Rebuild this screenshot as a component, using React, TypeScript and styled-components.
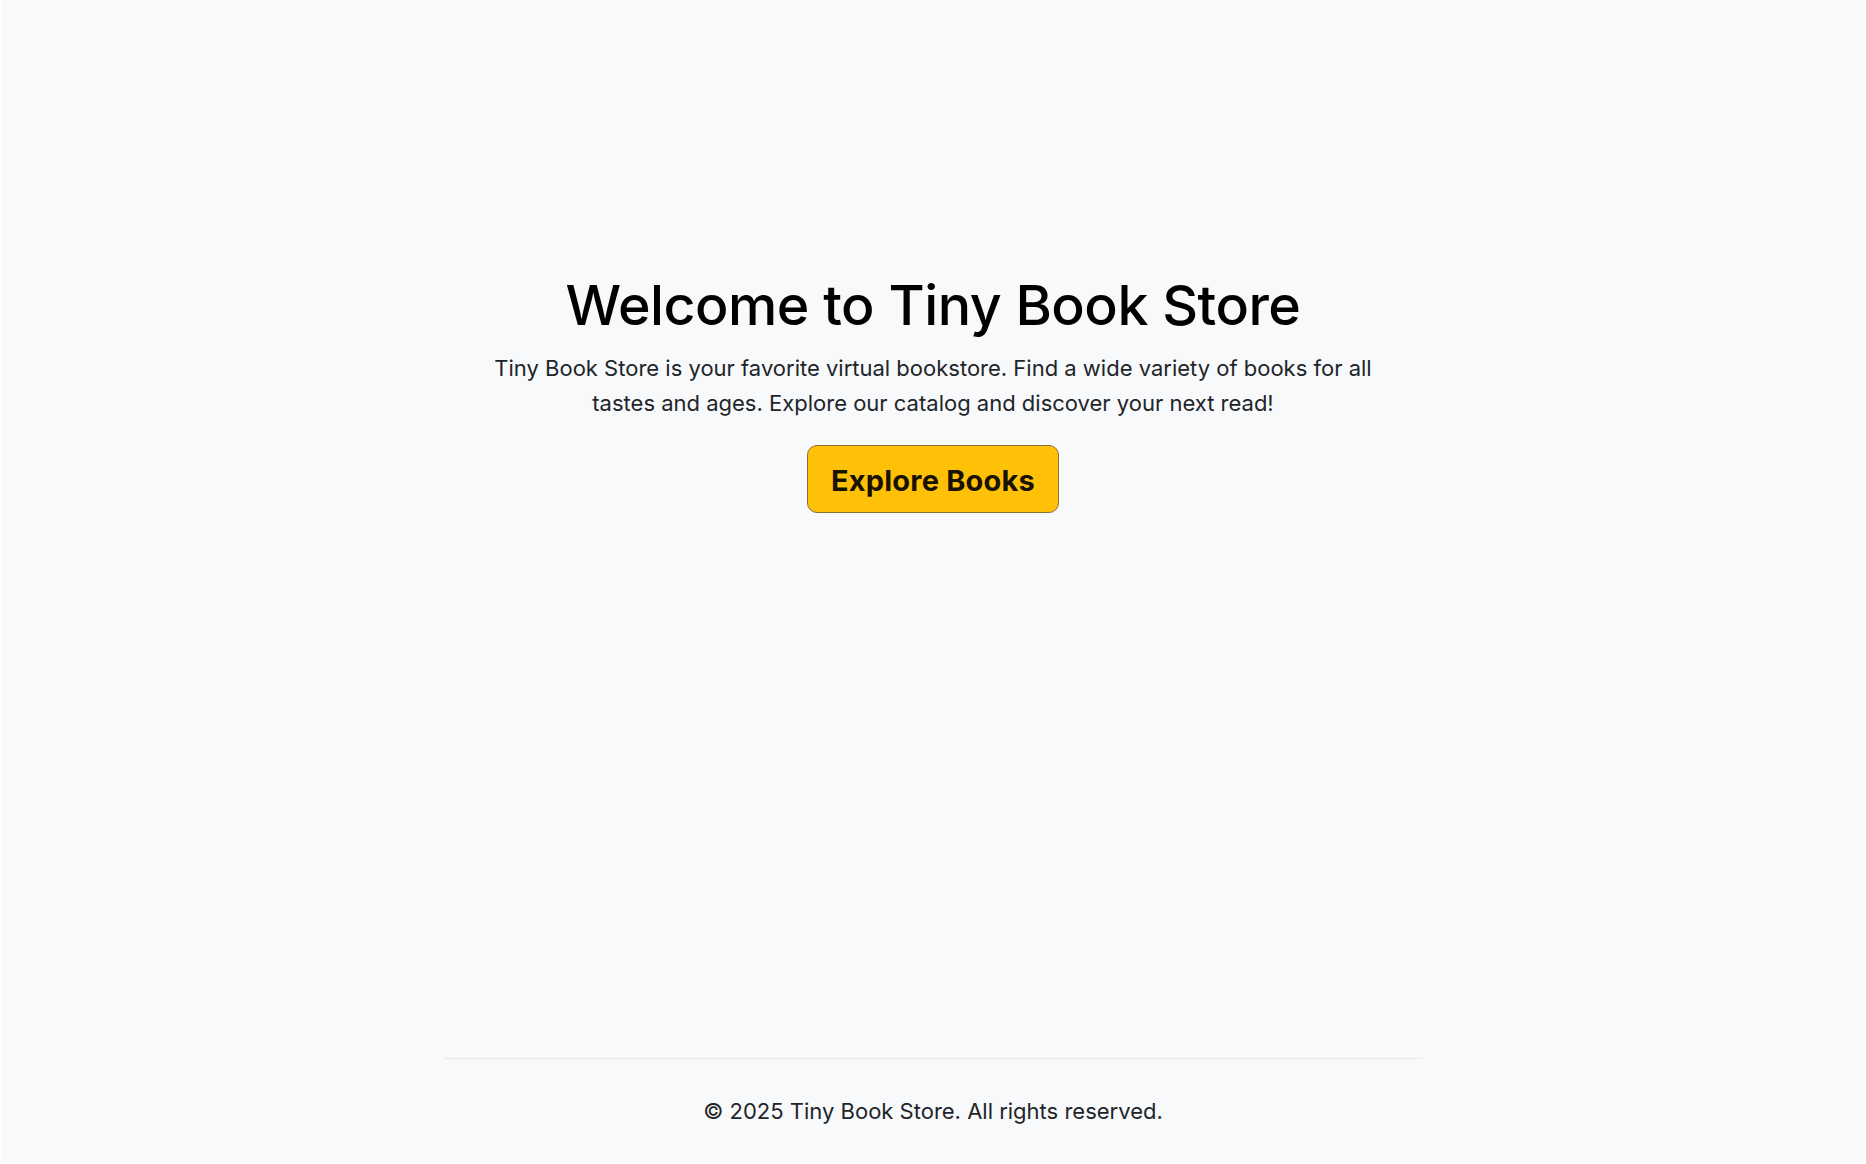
import React from 'react';
import styled, { createGlobalStyle } from 'styled-components';

const GlobalStyle = createGlobalStyle`
  html, body {
    margin: 0;
    padding: 0;
    background: #ffffff;
  }
  * {
    box-sizing: border-box;
  }
`;

const App: React.FC = () => {
  return (
    <>
      <GlobalStyle />
      <Page>
        <Main>
          <Hero>
            <Title>Welcome to Tiny Book Store</Title>
            <Lead>
              Tiny Book Store is your favorite virtual bookstore. Find a wide variety of books for all
              tastes and ages. Explore our catalog and discover your next read!
            </Lead>
            <CTAButton>Explore Books</CTAButton>
          </Hero>
        </Main>
        <Footer>
          <FooterText>&copy; 2025 Tiny Book Store. All rights reserved.</FooterText>
        </Footer>
      </Page>
    </>
  );
};

const Page = styled.div`
  height: 1162px;
  margin: 0 2px 2px 2px;
  background-color: #f8f9fa;
  font-family: 'Inter', 'Noto Sans', sans-serif;
  color: #212529;
  display: flex;
  flex-direction: column;
`;

const Main = styled.main`
  flex: 1;
  display: flex;
  justify-content: center;
  padding-top: 272px;
`;

const Hero = styled.section`
  display: flex;
  flex-direction: column;
  align-items: center;
  text-align: center;
`;

const Title = styled.h1`
  margin: 0 0 12px;
  font-size: 55.5px;
  font-weight: 500;
  line-height: 1.2;
  color: #000;
  letter-spacing: -0.5px;
`;

const Lead = styled.p`
  margin: 0 0 24px;
  max-width: 900px;
  font-size: 22px;
  line-height: 35px;
  color: #212529;
`;

const CTAButton = styled.button`
  width: 252px;
  height: 68px;
  padding: 4px 0 0;
  background-color: #ffc107;
  border: 1px solid #8a7036;
  border-radius: 10px;
  color: #1a1200;
  font-family: 'Inter', 'Noto Sans', sans-serif;
  font-size: 29px;
  font-weight: 700;
  letter-spacing: 0.2px;
  cursor: pointer;
`;

const Footer = styled.footer`
  width: 978px;
  margin: 0 auto;
  border-top: 1px solid #e6e8ea;
  padding: 39px 0 38px;
  text-align: center;
`;

const FooterText = styled.p`
  margin: 0;
  font-size: 22px;
  color: #212529;
`;

export default App;
